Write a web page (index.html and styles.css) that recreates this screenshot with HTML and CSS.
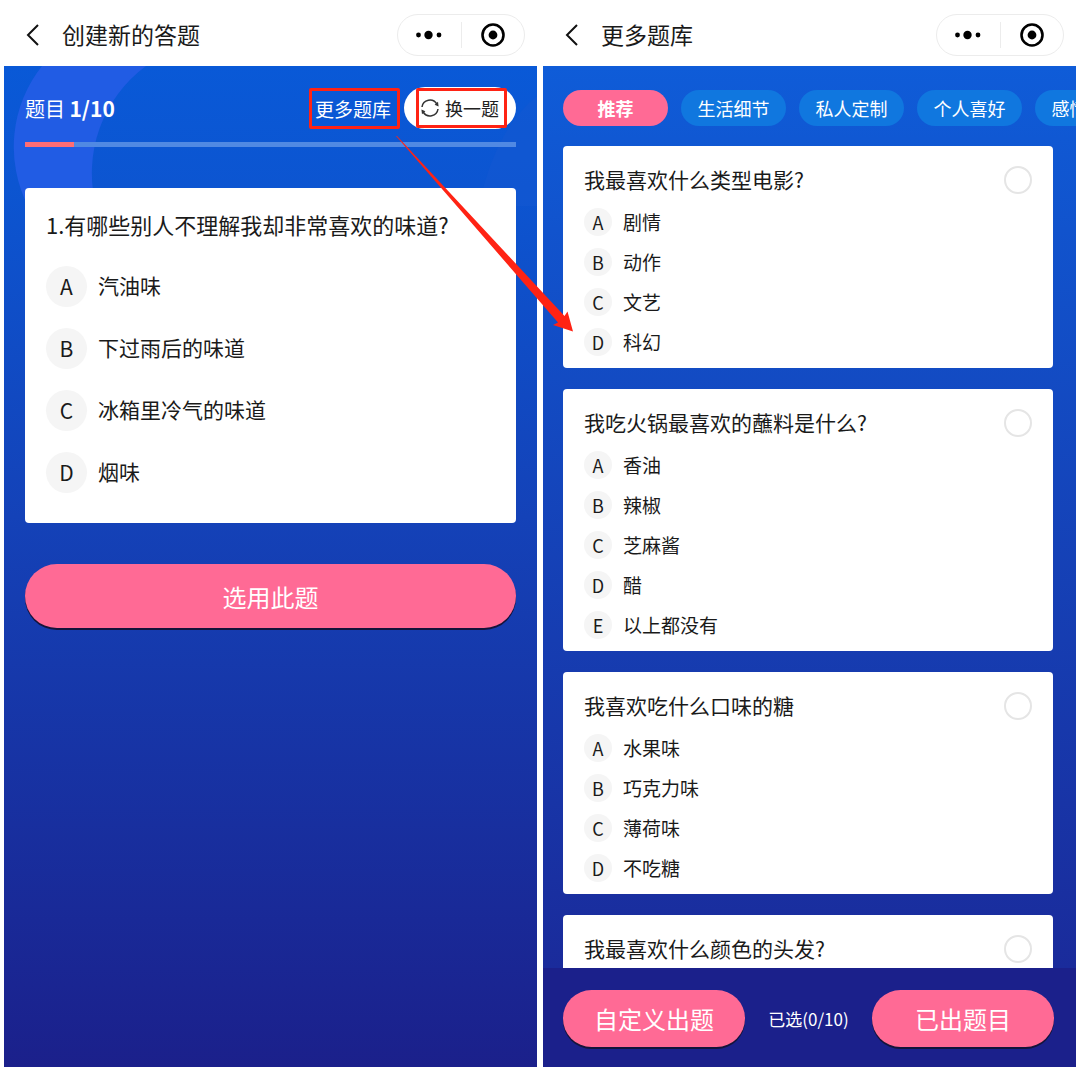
FILE: index.html
```
<!DOCTYPE html>
<html lang="zh-CN">
<head>
    <meta charset="UTF-8">
    <meta name="viewport" content="width=device-width, initial-scale=1.0">
    <title>创建新的答题</title>
    <link rel="stylesheet" href="styles.css">
</head>
<body>
    <section class="screen">
        <header class="navbar">
            <button class="back" aria-label="返回">
                <svg width="14" height="24" viewBox="0 0 14 24"><path d="M12 2 L2 12 L12 22" fill="none" stroke="#111" stroke-width="2"/></svg>
            </button>
            <h1 class="title">创建新的答题</h1>
            <div class="capsule">
                <button class="capsule-btn" aria-label="更多">
                    <svg width="26" height="10" viewBox="0 0 26 10"><circle cx="2.5" cy="5" r="2.4"/><circle cx="12.5" cy="5" r="4.2"/><circle cx="23" cy="5" r="2.4"/></svg>
                </button>
                <button class="capsule-btn" aria-label="关闭">
                    <svg width="24" height="24" viewBox="0 0 24 24"><circle cx="12" cy="12" r="10.5" fill="none" stroke="#000" stroke-width="2.6"/><circle cx="12" cy="12" r="4.4"/></svg>
                </button>
            </div>
        </header>

        <main class="quiz">
            <svg class="decor decor-left" width="150" height="140" viewBox="0 0 150 140">
                <path d="M38 0 A130 130 0 0 0 24 140 H92 A133 133 0 0 1 142 0 Z" fill="#215ce4"/>
            </svg>
            <svg class="decor decor-right" width="110" height="140" viewBox="0 0 110 140">
                <path d="M110 30 Q68 64 52 140 H110 Z" fill="#1558d2"/>
            </svg>

            <div class="quiz-head">
                <p class="counter">题目 <b>1/10</b></p>
                <a class="more-link" href="#library">更多题库<span class="mark"></span></a>
                <button class="swap">
                    <svg width="18" height="18" viewBox="0 0 18 18">
                        <path d="M1 8 A8 8 0 0 1 15.8 5 M17 10 A8 8 0 0 1 2.2 13" fill="none" stroke="#333" stroke-width="1.5"/>
                        <path d="M17.6 7.4 L13.6 5.8 L17 2.8 Z M0.4 10.6 L4.4 12.2 L1 15.2 Z" fill="#333"/>
                    </svg>
                    换一题<span class="mark"></span>
                </button>
            </div>
            <div class="progress"><div class="progress-bar" style="width: 10%"></div></div>

            <div class="card quiz-card">
                <h2 class="quiz-question">1.有哪些别人不理解我却非常喜欢的味道?</h2>
                <ul class="quiz-options">
                    <li><span class="letter">A</span>汽油味</li>
                    <li><span class="letter">B</span>下过雨后的味道</li>
                    <li><span class="letter">C</span>冰箱里冷气的味道</li>
                    <li><span class="letter">D</span>烟味</li>
                </ul>
            </div>

            <button class="pink-btn choose">选用此题</button>
        </main>

        <svg class="arrow" width="184" height="200" viewBox="0 0 184 200">
            <path d="M3 2 L4 2 L171.5 182 L174.5 177.5 L180 197.5 L160 191 L165 188.5 Z" fill="#ff2314"/>
        </svg>
    </section>

    <section class="screen" id="library">
        <header class="navbar">
            <button class="back" aria-label="返回">
                <svg width="14" height="24" viewBox="0 0 14 24"><path d="M12 2 L2 12 L12 22" fill="none" stroke="#111" stroke-width="2"/></svg>
            </button>
            <h1 class="title">更多题库</h1>
            <div class="capsule">
                <button class="capsule-btn" aria-label="更多">
                    <svg width="26" height="10" viewBox="0 0 26 10"><circle cx="2.5" cy="5" r="2.4"/><circle cx="12.5" cy="5" r="4.2"/><circle cx="23" cy="5" r="2.4"/></svg>
                </button>
                <button class="capsule-btn" aria-label="关闭">
                    <svg width="24" height="24" viewBox="0 0 24 24"><circle cx="12" cy="12" r="10.5" fill="none" stroke="#000" stroke-width="2.6"/><circle cx="12" cy="12" r="4.4"/></svg>
                </button>
            </div>
        </header>

        <main class="library">
            <nav class="tabs">
                <button class="tab active">推荐</button>
                <button class="tab">生活细节</button>
                <button class="tab">私人定制</button>
                <button class="tab">个人喜好</button>
                <button class="tab">感情生活</button>
            </nav>

            <div class="card item">
                <div class="item-head">
                    <label for="q1">我最喜欢什么类型电影?</label>
                    <input type="checkbox" id="q1">
                </div>
                <ul class="item-options">
                    <li><span class="letter">A</span>剧情</li>
                    <li><span class="letter">B</span>动作</li>
                    <li><span class="letter">C</span>文艺</li>
                    <li><span class="letter">D</span>科幻</li>
                </ul>
            </div>

            <div class="card item">
                <div class="item-head">
                    <label for="q2">我吃火锅最喜欢的蘸料是什么?</label>
                    <input type="checkbox" id="q2">
                </div>
                <ul class="item-options">
                    <li><span class="letter">A</span>香油</li>
                    <li><span class="letter">B</span>辣椒</li>
                    <li><span class="letter">C</span>芝麻酱</li>
                    <li><span class="letter">D</span>醋</li>
                    <li><span class="letter">E</span>以上都没有</li>
                </ul>
            </div>

            <div class="card item">
                <div class="item-head">
                    <label for="q3">我喜欢吃什么口味的糖</label>
                    <input type="checkbox" id="q3">
                </div>
                <ul class="item-options">
                    <li><span class="letter">A</span>水果味</li>
                    <li><span class="letter">B</span>巧克力味</li>
                    <li><span class="letter">C</span>薄荷味</li>
                    <li><span class="letter">D</span>不吃糖</li>
                </ul>
            </div>

            <div class="card item">
                <div class="item-head">
                    <label for="q4">我最喜欢什么颜色的头发?</label>
                    <input type="checkbox" id="q4">
                </div>
            </div>
        </main>

        <footer class="footer">
            <button class="pink-btn">自定义出题</button>
            <span class="selected">已选(0/10)</span>
            <button class="pink-btn">已出题目</button>
        </footer>
    </section>
</body>
</html>
```
FILE: styles.css
```
:root {
    --pink: #ff6a95;
    --red: #ff2314;
    --navy: #1b208b;
    --text: #1a1a1a;
}

* {
    margin: 0;
    padding: 0;
    box-sizing: border-box;
    font-family: "Noto Sans CJK SC", "Noto Sans", sans-serif;
}

body {
    background: #fff;
    color: var(--text);
    height: 100vh;
    padding: 0 4px 5px;
    display: grid;
    grid-template-columns: minmax(0, 1fr) minmax(0, 1fr);
    grid-template-rows: minmax(0, 1fr);
    gap: 6px;
}

button {
    border: none;
    background: none;
    cursor: pointer;
}

ul {
    list-style: none;
}

.screen {
    position: relative;
    display: flex;
    flex-direction: column;
    min-height: 0;
}

/* top bar */
.navbar {
    display: flex;
    align-items: center;
    height: 66px;
    padding: 4px 12px 0 22px;
    flex-shrink: 0;
}

.back {
    display: flex;
    width: 36px;
}

.title {
    flex: 1;
    font-size: 23px;
    font-weight: 400;
    line-height: 32px;
    padding-bottom: 3px;
}

.capsule {
    display: flex;
    align-items: center;
    width: 128px;
    height: 42px;
    border: 1px solid #ececec;
    border-radius: 21px;
}

.capsule-btn {
    flex: 1;
    display: flex;
    align-items: center;
    justify-content: center;
    height: 26px;
}

.capsule-btn + .capsule-btn {
    border-left: 1px solid #ececec;
}

.card {
    background: #fff;
    border-radius: 4px;
}

.letter {
    display: flex;
    align-items: center;
    justify-content: center;
    background: #f5f5f5;
    border-radius: 50%;
}

.pink-btn {
    background: var(--pink);
    color: #fff;
    font-size: 24px;
    border-radius: 32px;
    box-shadow: 0 2px 0 #14143a;
}

/* create quiz */
.quiz {
    position: relative;
    flex: 1;
    padding: 21px;
    background: linear-gradient(#0959d7, #0c55d1 12%, #1442b8 45%, #1b208b);
}

.decor {
    position: absolute;
    top: 0;
}

.decor-left {
    left: 0;
}

.decor-right {
    right: 0;
    opacity: 0.5;
}

.quiz-head {
    position: relative;
    display: flex;
    align-items: center;
    height: 42px;
    color: #fff;
}

.counter {
    flex: 1;
    font-size: 20px;
}

.counter b {
    font-size: 21px;
    font-weight: 700;
}

.more-link {
    position: relative;
    color: #fff;
    font-size: 19px;
    text-decoration: none;
    margin-right: 13px;
}

.swap {
    position: relative;
    display: flex;
    align-items: center;
    gap: 6px;
    width: 112px;
    height: 42px;
    padding-left: 17px;
    border-radius: 21px;
    background: #fff;
    color: #222;
    font-size: 18px;
}

/* red highlight frames */
.mark {
    position: absolute;
    border: 3px solid var(--red);
    border-radius: 2px;
}

.more-link .mark {
    inset: -7px -9px -7px -6px;
}

.swap .mark {
    inset: 1px 9px 1px 12px;
}

.arrow {
    position: absolute;
    top: 134px;
    right: -40px;
    z-index: 2;
    pointer-events: none;
}

.progress {
    position: relative;
    height: 5px;
    margin: 13px 0 41px;
    background: #5089e3;
}

.progress-bar {
    height: 100%;
    background: #ff6d75;
}

.quiz-card {
    position: relative;
    padding: 22px 21px 30px;
}

.quiz-question {
    font-size: 22px;
    font-weight: 400;
    line-height: 28px;
    margin-bottom: 28px;
}

.quiz-options {
    display: grid;
    gap: 21px;
}

.quiz-options li {
    display: flex;
    gap: 11px;
    font-size: 21px;
    line-height: 38px;
}

.quiz-options .letter {
    width: 41px;
    height: 41px;
    padding-bottom: 2px;
}

.choose {
    width: 100%;
    height: 64px;
    margin-top: 41px;
}

/* question library */
.library {
    flex: 1;
    min-height: 0;
    overflow: hidden;
    padding: 24px 23px 0 20px;
    background: linear-gradient(#0f5cd8, #1a2b9b);
}

.tabs {
    display: flex;
    gap: 13px;
    margin: 0 -23px 20px 0;
    overflow: hidden;
}

.tab {
    flex-shrink: 0;
    width: 105px;
    height: 36px;
    border-radius: 18px;
    background: #1077df;
    color: #fff;
    font-size: 18px;
}

.tab.active {
    background: var(--pink);
    font-weight: 700;
}

.item {
    padding: 20px 21px 12px;
    margin-bottom: 21px;
}

.item-head {
    display: flex;
    justify-content: space-between;
    height: 29px;
    font-size: 21px;
    line-height: 26px;
}

.item-head input {
    appearance: none;
    width: 28px;
    height: 28px;
    border: 2px solid #e5e5e5;
    border-radius: 50%;
}

.item-head input:checked {
    background: var(--pink);
    border-color: var(--pink);
}

.item-options {
    display: grid;
    gap: 12px;
    margin-top: 13px;
}

.item-options li {
    display: flex;
    align-items: center;
    gap: 11px;
    font-size: 19px;
    line-height: 28px;
}

.item-options .letter {
    width: 28px;
    height: 28px;
    font-size: 18px;
}

.footer {
    display: flex;
    align-items: center;
    justify-content: space-between;
    padding: 22px 22px 20px 20px;
    background: var(--navy);
    color: #fff;
}

.footer .pink-btn {
    width: 182px;
    height: 57px;
}

.selected {
    font-size: 17px;
}
```
